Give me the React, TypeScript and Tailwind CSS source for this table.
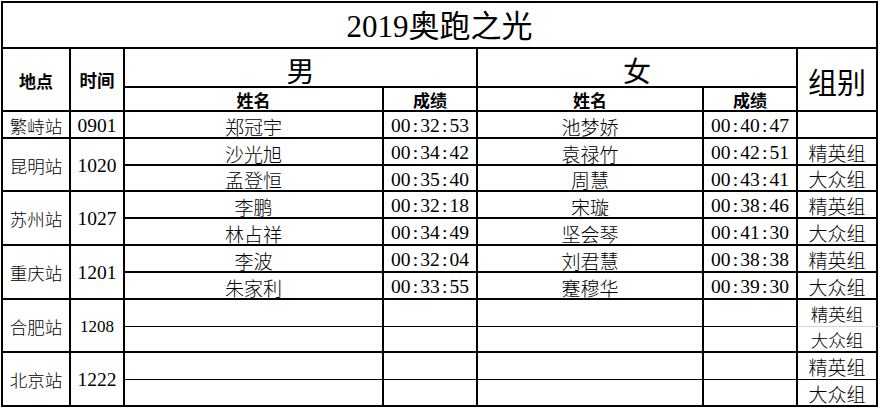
import React from "react";

const SERIF = "font-['Liberation_Serif','Noto_Sans_CJK_SC',serif]";
const CJK = "font-['Noto_Sans_CJK_SC','Noto_Sans_CJK_SC',sans-serif]";

type Row = [string, string, string, string, string];
type Group = { st: string; t: string; small?: boolean; rows: Row[] };

const groups: Group[] = [
  { st: "繁峙站", t: "0901", rows: [["郑冠宇", "00:32:53", "池梦娇", "00:40:47", ""]] },
  {
    st: "昆明站",
    t: "1020",
    rows: [
      ["沙光旭", "00:34:42", "袁禄竹", "00:42:51", "精英组"],
      ["孟登恒", "00:35:40", "周慧", "00:43:41", "大众组"],
    ],
  },
  {
    st: "苏州站",
    t: "1027",
    rows: [
      ["李鹏", "00:32:18", "宋璇", "00:38:46", "精英组"],
      ["林占祥", "00:34:49", "坚会琴", "00:41:30", "大众组"],
    ],
  },
  {
    st: "重庆站",
    t: "1201",
    rows: [
      ["李波", "00:32:04", "刘君慧", "00:38:38", "精英组"],
      ["朱家利", "00:33:55", "蹇穆华", "00:39:30", "大众组"],
    ],
  },
  {
    st: "合肥站",
    t: "1208",
    small: true,
    rows: [
      ["", "", "", "", "精英组"],
      ["", "", "", "", "大众组"],
    ],
  },
  {
    st: "北京站",
    t: "1222",
    rows: [
      ["", "", "", "", "精英组"],
      ["", "", "", "", "大众组"],
    ],
  },
];

function Time({ v }: { v: string }) {
  if (!v) return null;
  const parts = v.split(":");
  return (
    <span className={`${SERIF} text-[19.5px] leading-none flex`}>
      {parts.map((p, i) => (
        <React.Fragment key={i}>
          {i > 0 && <span className="inline-block w-[9.75px] text-center">:</span>}
          <span>{p}</span>
        </React.Fragment>
      ))}
    </span>
  );
}

const base = "border-r-2 border-black flex items-center justify-center";

export default function App() {
  return (
    <div className="w-[880px] h-[408px] bg-white pt-px pl-px overflow-hidden">
      <div className="grid w-[877px] grid-cols-[68px_54px_259px_94px_226px_94px_80px] grid-rows-[46px_39px_24px_27px_27px_26px_27px_27px_27px_27px_27px_26px_27px_27px] border-l-2 border-t-2 border-black text-black">
        <div className={`${base} border-b-2 col-span-7 pt-[3px]`}>
          <span className={`${SERIF} text-[31px] leading-none`}>2019奥跑之光</span>
        </div>

        <div className={`${base} border-b-2 row-span-2 pt-[2px]`}>
          <span className={`${CJK} font-bold text-[17px]`}>地点</span>
        </div>
        <div className={`${base} border-b-2 row-span-2 pt-[2px]`}>
          <span className={`${CJK} font-bold text-[17.5px]`}>时间</span>
        </div>
        <div className={`${base} border-b-2 col-span-2 pt-[4px]`}>
          <span className={`${CJK} text-[28px] leading-none`}>男</span>
        </div>
        <div className={`${base} border-b-2 col-span-2 pt-[4px]`}>
          <span className={`${CJK} text-[28px] leading-none`}>女</span>
        </div>
        <div className={`${base} border-b-2 row-span-2 pt-[4px]`}>
          <span className={`${CJK} text-[29px] leading-none`}>组别</span>
        </div>

        {["姓名", "成绩", "姓名", "成绩"].map((h, i) => (
          <div key={i} className={`${base} border-b-2`}>
            <span className={`${CJK} font-bold text-[17px] leading-none`}>{h}</span>
          </div>
        ))}

        {groups.map((g, gi) => {
          const span = g.rows.length === 2 ? "row-span-2" : "";
          const empty = g.rows[0][0] === "";
          return (
            <React.Fragment key={gi}>
              <div className={`${base} border-b-2 ${span} pt-[2px]`}>
                <span className={`${CJK} font-light text-[17.5px] leading-none`}>{g.st}</span>
              </div>
              <div className={`${base} border-b-2 ${span} pt-[2px]`}>
                <span className={`${SERIF} ${g.small ? "text-[17px]" : "text-[19.5px]"} leading-none`}>{g.t}</span>
              </div>
              {g.rows.map((r, ri) => {
                const last = ri === g.rows.length - 1;
                const bb = last ? "border-b-2" : empty ? "border-b" : "border-b-2";
                const groupBorder =
                  last ? "border-b-2" : g.small ? "border-b border-b-[#d4d4d4]" : empty ? "border-b" : "border-b-2";
                return (
                  <React.Fragment key={ri}>
                    <div className={`${base} ${bb} pt-[3px]`}>
                      <span className={`${CJK} font-light text-[19px] leading-none`}>{r[0]}</span>
                    </div>
                    <div className={`${base} ${bb} pt-[3px]`}>
                      <Time v={r[1]} />
                    </div>
                    <div className={`${base} ${bb} pt-[3px]`}>
                      <span className={`${CJK} font-light text-[19px] leading-none`}>{r[2]}</span>
                    </div>
                    <div className={`${base} ${bb} pt-[3px]`}>
                      <Time v={r[3]} />
                    </div>
                    <div className={`${base} ${groupBorder} pt-[1px]`}>
                      <span className={`${CJK} font-light ${g.small ? "text-[17.5px]" : "text-[19px]"} leading-none`}>{r[4]}</span>
                    </div>
                  </React.Fragment>
                );
              })}
            </React.Fragment>
          );
        })}
      </div>
    </div>
  );
}
